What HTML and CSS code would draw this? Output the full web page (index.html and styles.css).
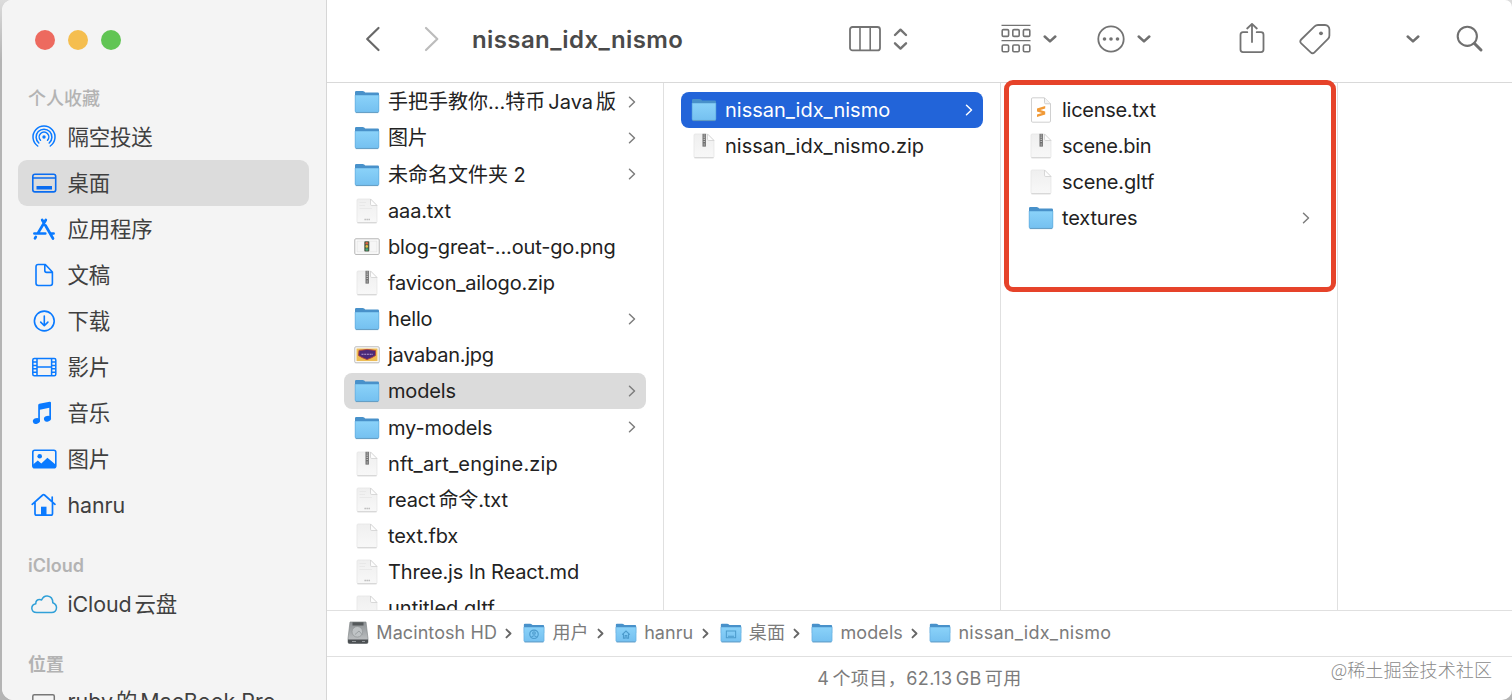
FILE: index.html
```html
<!DOCTYPE html>
<html lang="zh-CN">
<head>
  <meta charset="UTF-8" />
  <title>nissan_idx_nismo</title>
  <link rel="stylesheet" href="styles.css">
</head>
<body>

<svg class="defs" width="0" height="0">
  <defs>
    <linearGradient id="folderFront" x1="0" y1="0" x2="0" y2="1">
      <stop offset="0" stop-color="#8ad2f9" />
      <stop offset="1" stop-color="#74c0f0" />
    </linearGradient>
    <linearGradient id="paper" x1="0" y1="0" x2="0" y2="1">
      <stop offset="0" stop-color="#efefef" />
      <stop offset="1" stop-color="#f8f8f8" />
    </linearGradient>
    <linearGradient id="metal" x1="0" y1="0" x2="0" y2="1">
      <stop offset="0" stop-color="#8d9194" />
      <stop offset="1" stop-color="#c4c7c9" />
    </linearGradient>
  </defs>
  <symbol id="folder" viewBox="0 0 26 24">
    <path d="M1 2.2Q1 1 2.2 1H8.6Q9.5 1 10.2 1.6L11.2 2.5H23.8Q25 2.5 25 3.7V12H1Z" fill="#4891ca" />
    <path d="M1 5.2H25V21Q25 22.6 23.4 22.6H2.6Q1 22.6 1 21Z" fill="url(#folderFront)" />
    <path d="M1.2 5V21Q1.2 22.4 2.6 22.4H23.4Q24.8 22.4 24.8 21V5" fill="none" stroke="#62acde" stroke-width=".7" />
    <path d="M1.8 22.6H24.2" stroke="#6299be" stroke-width=".9" />
  </symbol>
  <symbol id="doc" viewBox="0 0 26 26">
    <path d="M3 2.2Q3 1 4.2 1H16.5L23 7.5V23.4Q23 24.6 21.8 24.6H4.2Q3 24.6 3 23.4Z" fill="url(#paper)" stroke="#e4e4e4" stroke-width=".7" />
    <path d="M3.4 24.8H22.6" stroke="#c8c8c8" stroke-width=".8" />
    <path d="M16.5 1V6.3Q16.5 7.5 17.7 7.5H23Z" fill="#fdfdfd" stroke="#cfcfcf" stroke-width=".8" />
  </symbol>
  <symbol id="text" viewBox="0 0 26 26">
    <use href="#doc" />
    <path d="M5.5 4.5H12M5.5 7.5H11M5.5 10.5H18" stroke="#e6e6e6" stroke-width=".8" />
    <path d="M10.5 21.5H16" stroke="#b4b4b4" stroke-width="1.6" stroke-dasharray="1.3 .7" />
  </symbol>
  <symbol id="zip" viewBox="0 0 26 26">
    <use href="#doc" />
    <path d="M13.2 .8V13.6" stroke="#6f6f6f" stroke-width="3.4" />
    <path d="M13.2 1.4V10" stroke="#c9c9c9" stroke-width="1.3" stroke-dasharray="1.1 1.1" />
    <path d="M13.2 10.2V12.8" stroke="#a5a5a5" stroke-width="1.2" />
  </symbol>
  <symbol id="sublime" viewBox="0 0 26 26">
    <path d="M3.5 2Q3.5 .8 4.7 .8H16.5L22.5 6.8V24Q22.5 25.2 21.3 25.2H4.7Q3.5 25.2 3.5 24Z" fill="#fff" stroke="#c4c4c4" stroke-width=".8" />
    <path d="M16.5 1V5.6Q16.5 6.8 17.7 6.8H22.4" fill="#f4f4f4" stroke="#c4c4c4" stroke-width=".8" />
    <path d="M17.2 9L9 11.4V14.6L14 16L9 17.4V20L17.2 17.6V14.4L12.3 13L17.2 11.6Z" fill="#f19a37" />
  </symbol>
  <symbol id="png" viewBox="0 0 26 18">
    <rect x=".8" y=".8" width="24.4" height="15.6" rx="1" fill="#fff" stroke="#b3b3b3" />
    <rect x="3" y="3" width="20" height="11" fill="#f6f6f6" stroke="#dcdcdc" stroke-width=".6" />
    <rect x="10.3" y="3.3" width="5" height="10.2" rx=".8" fill="#4c5b45" />
    <circle cx="12.8" cy="5.2" r="1.3" fill="#de6341" />
    <circle cx="12.8" cy="8.4" r="1.3" fill="#e4c144" />
    <circle cx="12.8" cy="11.5" r="1.3" fill="#3fae7c" />
  </symbol>
  <symbol id="jpg" viewBox="0 0 26 18">
    <rect x=".8" y=".8" width="24.4" height="16" rx="1" fill="#fff" stroke="#b9b9b9" />
    <rect x="2.5" y="2.5" width="21" height="12.6" fill="#edbd55" />
    <path d="M5 4.4L9 4L13 3.4L18 4L21.5 4.6V9.5L18 11.5L13 13.6L8 11.5L4.5 9.5Z" fill="#4b2a78" stroke="#b6453a" stroke-width=".9" />
    <path d="M7.5 8.3H19" stroke="#b9a1d3" stroke-width="1.1" stroke-dasharray="2 .7" />
  </symbol>
  <symbol id="disk" viewBox="0 0 22 24">
    <path d="M3 1H19L21 17.5V21Q21 22.5 19.5 22.5H2.5Q1 22.5 1 21V17.5Z" fill="url(#metal)" stroke="#85898b" stroke-width=".7" />
    <rect x="5.5" y="1.3" width="11" height="3.2" fill="#55595b" />
    <circle cx="10.3" cy="10.8" r="5.3" fill="#bfc3c5" stroke="#96999b" stroke-width=".8" />
    <path d="M8 13.5L12 10L15.5 14" fill="none" stroke="#9ba0a2" />
    <path d="M1 18.6H21V21Q21 22.6 19.5 22.6H2.5Q1 22.6 1 21Z" fill="#4b4f52" />
    <path d="M5 20.5H9M15 20.5H18" stroke="#92979a" />
  </symbol>
  <symbol id="next" viewBox="0 0 8 12">
    <path d="M1.5 1.3L6.5 6L1.5 10.7" fill="none" stroke="currentColor" stroke-width="1.5" stroke-linecap="round" stroke-linejoin="round" />
  </symbol>
  <symbol id="sep" viewBox="0 0 7 11">
    <path d="M1.5 1.6L5.5 5.5L1.5 9.4" fill="none" stroke="currentColor" stroke-width="1.9" stroke-linecap="round" stroke-linejoin="round" />
  </symbol>
  <symbol id="down" viewBox="0 0 14 8">
    <path d="M1.7 1.5L7 6.4L12.3 1.5" fill="none" stroke="currentColor" stroke-width="2.5" stroke-linecap="round" stroke-linejoin="round" />
  </symbol>
</svg>

<div class="window">
  <aside class="sidebar">
    <div class="lights"><i class="red"></i><i class="yellow"></i><i class="green"></i></div>
    <h2 class="heading">个人收藏</h2>
    <a class="place">
      <svg width="32" height="28" viewBox="0 0 32 28"><g fill="none" stroke="#0a7aff" stroke-width="1.5" stroke-linecap="round"><path d="M9.7 23A11 11 0 1 1 22.3 23" /><path d="M10.8 20A7.9 7.9 0 1 1 21.2 20" /><path d="M12.5 17.2A4.8 4.8 0 1 1 19.5 17.2" /></g><circle cx="16" cy="14" r="1.7" fill="#0a7aff" /></svg>
      <span>隔空投送</span>
    </a>
    <a class="place active">
      <svg width="32" height="28" viewBox="0 0 32 28"><rect x="4.8" y="5.3" width="22.9" height="17.6" rx="2.2" fill="none" stroke="#0a6cf0" stroke-width="1.6" /><path d="M5 9H27.5" stroke="#0a6cf0" stroke-width="1.5" /><rect x="8.5" y="17" width="15.5" height="3.5" fill="#0a6cf0" /></svg>
      <span>桌面</span>
    </a>
    <a class="place">
      <svg width="32" height="28" viewBox="0 0 32 28"><g fill="none" stroke="#0a7aff" stroke-width="2.7" stroke-linecap="round"><path d="M17.8 5L9.8 18.4M14.2 5L16 8M17.5 10.5L25 23.5M6.4 18.5H17.3M22.6 18.5H25.6" /><path d="M7.8 21.9L7 23.3" /></g></svg>
      <span>应用程序</span>
    </a>
    <a class="place">
      <svg width="32" height="28" viewBox="0 0 32 28"><path d="M8 5.7Q8 3.5 10.2 3.5H17.3L24.4 11V22.3Q24.4 24.5 22.2 24.5H10.2Q8 24.5 8 22.3ZM16.8 3.7V9.6Q16.8 11.4 18.6 11.4H24.2" fill="none" stroke="#0a7aff" stroke-width="1.6" stroke-linejoin="round" /></svg>
      <span>文稿</span>
    </a>
    <a class="place">
      <svg width="32" height="28" viewBox="0 0 32 28"><g fill="none" stroke="#0a7aff" stroke-width="1.6" stroke-linecap="round" stroke-linejoin="round"><circle cx="16.3" cy="14" r="9.9" /><path d="M16.3 9V18.5M12.7 15.1L16.3 18.7L19.9 15.1" /></g></svg>
      <span>下载</span>
    </a>
    <a class="place">
      <svg width="32" height="28" viewBox="0 0 32 28"><g fill="none" stroke="#0a7aff" stroke-width="1.5"><rect x="4.8" y="5.5" width="23" height="17.3" rx="1.5" /><path d="M9 5.5V23M23.6 5.5V23M9 14.1H23.6M5 9H9M5 12.4H9M5 15.8H9M5 19.2H9M23.6 9H27.5M23.6 12.4H27.5M23.6 15.8H27.5M23.6 19.2H27.5" /></g></svg>
      <span>影片</span>
    </a>
    <a class="place">
      <svg width="32" height="28" viewBox="0 0 32 28"><g fill="#0a7aff"><path d="M10.2 6.2Q10.2 5.1 11.3 4.8L21.6 2.7Q23 2.5 23 3.8V20H21.3V8.8L11.9 10.8V22.5H10.2Z" /><ellipse cx="8.4" cy="22" rx="3.6" ry="2.8" transform="rotate(-15 8.4 22)" /><ellipse cx="19.5" cy="19.8" rx="3.6" ry="2.8" transform="rotate(-15 19.5 19.8)" /></g></svg>
      <span>音乐</span>
    </a>
    <a class="place">
      <svg width="32" height="28" viewBox="0 0 32 28"><rect x="4.8" y="5.3" width="23" height="17.5" rx="2" fill="none" stroke="#0a7aff" stroke-width="1.6" /><circle cx="11.7" cy="11.2" r="2.3" fill="#0a7aff" /><path d="M5 19.5L9.8 15.6L13.3 18.5L19.4 12.8L27.5 19.5V22.5H5Z" fill="#0a7aff" /></svg>
      <span>图片</span>
    </a>
    <a class="place">
      <svg width="32" height="28" viewBox="0 0 32 28"><path d="M4.2 13.3L14.7 4Q15.6 3.3 16.5 4L27 13.3M7 11.5V22.5Q7 24.2 8.7 24.2H22.8Q24.5 24.2 24.5 22.5V11.5M24.2 6V10.5" fill="none" stroke="#0a7aff" stroke-width="1.7" stroke-linecap="round" /><path d="M13 24V15.7H18.5V24Z" fill="#0a7aff" /></svg>
      <span>hanru</span>
    </a>
    <h2 class="heading later">iCloud</h2>
    <a class="place">
      <svg width="32" height="28" viewBox="0 0 32 28"><path d="M8.8 22.6Q4 22.3 3.8 18.2Q3.8 14.6 7.8 13.7Q7.6 9.6 11.8 9.6Q12.8 9.6 13.6 10Q15.5 5.7 19.3 6Q24.7 6.4 24.8 12.7Q28.5 14.1 28.5 17.7Q28.3 22.3 23.5 22.6Z" fill="none" stroke="#30a0d8" stroke-width="1.5" stroke-linejoin="round" /></svg>
      <span>iCloud<b class="thin"></b>云盘</span>
    </a>
    <h2 class="heading later">位置</h2>
    <a class="place last">
      <svg width="32" height="28" viewBox="0 0 32 28"><rect x="4.8" y="6.8" width="21.5" height="15" rx="1.5" fill="none" stroke="#777" stroke-width="1.5" /><path d="M2 24H29" stroke="#777" stroke-width="1.5" /></svg>
      <span>ruby<b class="thin"></b>的<b class="thin"></b>MacBook Pro</span>
    </a>
  </aside>

  <main class="main">
    <header class="toolbar">
      <svg class="back" width="16" height="26" viewBox="0 0 16 26"><path d="M13.5 2L2.2 13L13.5 24" fill="none" stroke="#686868" stroke-width="2.2" stroke-linecap="round" stroke-linejoin="round" /></svg>
      <svg class="forward" width="16" height="26" viewBox="0 0 16 26"><path d="M2 2L13.3 13L2 24" fill="none" stroke="#bcbcbc" stroke-width="2.2" stroke-linecap="round" stroke-linejoin="round" /></svg>
      <h1 class="title">nissan_idx_nismo</h1>
      <div class="tool view">
        <svg width="32" height="26" viewBox="0 0 32 26"><g fill="none" stroke="#737373" stroke-width="1.8"><rect x="1" y="1" width="30" height="23.4" rx="2.5" /><path d="M11 1V24.4M21.2 1V24.4" stroke-width="1.6" /></g></svg>
        <svg width="15" height="24" viewBox="0 0 15 24"><path d="M2 8L7.5 2.7L13 8M2 16.3L7.5 21.6L13 16.3" fill="none" stroke="#737373" stroke-width="2.4" stroke-linecap="round" stroke-linejoin="round" /></svg>
      </div>
      <div class="tool group">
        <svg width="30" height="30" viewBox="0 0 30 30"><g fill="none" stroke="#737373" stroke-width="1.6"><path d="M.5 1.4H29.5M.5 16.6H29.5" stroke-width="1.4" /><rect x="1.2" y="5.6" width="6.4" height="6.8" rx="1.2" /><rect x="11.8" y="5.6" width="6.4" height="6.8" rx="1.2" /><rect x="22.4" y="5.6" width="6.4" height="6.8" rx="1.2" /><rect x="1.2" y="21" width="6.4" height="6.8" rx="1.2" /><rect x="11.8" y="21" width="6.4" height="6.8" rx="1.2" /><rect x="22.4" y="21" width="6.4" height="6.8" rx="1.2" /></g></svg>
        <svg width="14" height="8"><use href="#down" /></svg>
      </div>
      <div class="tool more">
        <svg width="28" height="28" viewBox="0 0 28 28"><circle cx="14" cy="14" r="12.7" fill="none" stroke="#737373" stroke-width="1.8" /><g fill="#737373"><circle cx="7.5" cy="14" r="1.8" /><circle cx="14" cy="14" r="1.8" /><circle cx="20.5" cy="14" r="1.8" /></g></svg>
        <svg width="14" height="8"><use href="#down" /></svg>
      </div>
      <svg class="share" width="26" height="32" viewBox="0 0 26 32"><g fill="none" stroke="#737373" stroke-width="1.8" stroke-linecap="round" stroke-linejoin="round"><path d="M8.3 9.2H4Q1.5 9.2 1.5 11.7V26.6Q1.5 29.1 4 29.1H22Q24.5 29.1 24.5 26.6V11.7Q24.5 9.2 22 9.2H17.7" /><path d="M13 19V.9M8.2 5.5L13 .9L17.8 5.5" /></g></svg>
      <svg class="tag" width="32" height="32" viewBox="0 0 32 32"><path d="M15.6 3.4Q17 2 19 2H26Q28 2 29.2 3.3Q30.4 4.6 30.4 6.5V12.5Q30.4 14.5 29 15.9L15.5 29.3Q13.6 31.2 11.7 29.3L2.2 20.3Q.3 18.4 2.2 16.5Z" fill="none" stroke="#737373" stroke-width="1.8" stroke-linejoin="round" /><circle cx="22" cy="10.3" r="1.9" fill="#737373" /></svg>
      <svg class="overflow" width="14" height="8"><use href="#down" /></svg>
      <svg class="search" width="28" height="28" viewBox="0 0 28 28"><g fill="none" stroke="#707070" stroke-linecap="round"><circle cx="11.3" cy="11.3" r="9.6" stroke-width="2.1" /><path d="M18.5 18.5L25 25" stroke-width="3" /></g></svg>
    </header>

    <div class="columns">
      <section class="column first">
        <div class="file"><svg width="26" height="24"><use href="#folder" /></svg><span class="plain">手把手教你…特币<b class="thin"></b>Java<b class="thin"></b>版</span><svg class="next"><use href="#next" /></svg></div>
        <div class="file"><svg width="26" height="24"><use href="#folder" /></svg><span>图片</span><svg class="next"><use href="#next" /></svg></div>
        <div class="file"><svg width="26" height="24"><use href="#folder" /></svg><span class="plain">未命名文件夹 2</span><svg class="next"><use href="#next" /></svg></div>
        <div class="file"><svg width="26" height="26"><use href="#text" /></svg><span>aaa.txt</span></div>
        <div class="file"><svg width="26" height="18"><use href="#png" /></svg><span>blog-great-...out-go.png</span></div>
        <div class="file"><svg width="26" height="26"><use href="#zip" /></svg><span>favicon_ailogo.zip</span></div>
        <div class="file"><svg width="26" height="24"><use href="#folder" /></svg><span>hello</span><svg class="next"><use href="#next" /></svg></div>
        <div class="file"><svg width="26" height="18"><use href="#jpg" /></svg><span class="tight">javaban.jpg</span></div>
        <div class="file open"><svg width="26" height="24"><use href="#folder" /></svg><span>models</span><svg class="next"><use href="#next" /></svg></div>
        <div class="file"><svg width="26" height="24"><use href="#folder" /></svg><span>my-models</span><svg class="next"><use href="#next" /></svg></div>
        <div class="file"><svg width="26" height="26"><use href="#zip" /></svg><span class="wide">nft_art_engine.zip</span></div>
        <div class="file"><svg width="26" height="26"><use href="#text" /></svg><span>react<b class="thin"></b>命令.txt</span></div>
        <div class="file"><svg width="26" height="26"><use href="#doc" /></svg><span>text.fbx</span></div>
        <div class="file"><svg width="26" height="26"><use href="#text" /></svg><span>Three.js In React.md</span></div>
        <div class="file"><svg width="26" height="26"><use href="#doc" /></svg><span class="plain">untitled.gltf</span></div>
      </section>
      <section class="column">
        <div class="file selected"><svg width="26" height="24"><use href="#folder" /></svg><span class="plain">nissan_idx_nismo</span><svg class="next"><use href="#next" /></svg></div>
        <div class="file"><svg width="26" height="26"><use href="#zip" /></svg><span class="plain">nissan_idx_nismo.zip</span></div>
      </section>
      <section class="column">
        <div class="file"><svg width="26" height="26"><use href="#sublime" /></svg><span class="tight">license.txt</span></div>
        <div class="file"><svg width="26" height="26"><use href="#zip" /></svg><span class="tight">scene.bin</span></div>
        <div class="file"><svg width="26" height="26"><use href="#doc" /></svg><span>scene.gltf</span></div>
        <div class="file"><svg width="26" height="24"><use href="#folder" /></svg><span>textures</span><svg class="next"><use href="#next" /></svg></div>
        <div class="marker"></div>
      </section>
    </div>

    <nav class="path">
      <svg width="22" height="24"><use href="#disk" /></svg><span class="crumb">Macintosh HD</span>
      <svg class="sep"><use href="#sep" /></svg>
      <svg width="22" height="22" viewBox="0 0 26 24"><use href="#folder" width="26" height="24" /><g fill="none" stroke="#4c9bcc" stroke-width="1.4"><circle cx="13" cy="13.5" r="5" /><circle cx="13" cy="12" r="1.5" /><path d="M10 17Q13 13.5 16 17" /></g></svg><span class="crumb">用户</span>
      <svg class="sep"><use href="#sep" /></svg>
      <svg width="22" height="22" viewBox="0 0 26 24"><use href="#folder" width="26" height="24" /><path d="M8.5 14L13 9.7L17.5 14M10 13V18H12V15H14V18H16V13" fill="none" stroke="#4c9bcc" stroke-width="1.3" /></svg><span class="crumb">hanru</span>
      <svg class="sep"><use href="#sep" /></svg>
      <svg width="22" height="22" viewBox="0 0 26 24"><use href="#folder" width="26" height="24" /><path d="M7.5 9.5H18.5V17.5H7.5ZM9.5 15.8H16.5" fill="none" stroke="#4c9bcc" stroke-width="1.2" /></svg><span class="crumb">桌面</span>
      <svg class="sep"><use href="#sep" /></svg>
      <svg width="22" height="22"><use href="#folder" /></svg><span class="crumb">models</span>
      <svg class="sep"><use href="#sep" /></svg>
      <svg width="22" height="22"><use href="#folder" /></svg><span class="crumb current">nissan_idx_nismo</span>
    </nav>

    <footer class="status">4<b class="thin"></b>个项目，62.13<b class="thin"></b>GB<b class="thin"></b>可用</footer>
  </main>
</div>

<div class="watermark">@稀土掘金技术社区</div>

</body>
</html>
```

FILE: styles.css
```css
* {
  box-sizing: border-box;
}

body {
  margin: 0;
  width: 1512px;
  height: 700px;
  overflow: hidden;
  position: relative;
  background: linear-gradient(#dcdcdc 0, #b4b4b4 60px, #b4b4b4 100%);
  font-family: Inter, "Noto Sans CJK SC", sans-serif;
  color: #222;
}

svg {
  display: block;
  flex: none;
}

.defs {
  position: absolute;
}

.window {
  display: flex;
  height: 700px;
  margin-left: 2px;
  border-radius: 10px 7px 10px 12px;
  overflow: hidden;
  background: #fff;
}

/* gap between latin and chinese runs */
.thin {
  display: inline-block;
  width: 3px;
}

/* sidebar */
.sidebar {
  width: 325px;
  flex: none;
  background: #f4f4f4;
  border-right: 1px solid #d6d6d6;
  padding-left: 16px;
}

.lights {
  display: flex;
  gap: 13px;
  padding: 29.5px 0 0 16.5px;
  height: 83px;
}

.lights i {
  width: 20px;
  height: 20px;
  border-radius: 50%;
}

.red { background: #ed6a5f; }
.yellow { background: #f5be4f; }
.green { background: #61c554; }

.heading {
  margin: 0;
  height: 31px;
  line-height: 31px;
  padding-left: 10px;
  font-size: 18px;
  font-weight: 600;
  color: #b3b3b3;
}

.heading:not(.later) {
  font-weight: 500;
}

.heading.later {
  margin-top: 21px;
  height: 32px;
  line-height: 34px;
}

.place {
  display: flex;
  align-items: center;
  gap: 7.5px;
  width: 291px;
  height: 46px;
  padding-left: 10px;
  border-radius: 9px;
  font-size: 21.4px;
  line-height: 24px;
  color: #404040;
  white-space: nowrap;
}

.place span {
  margin-top: -1px;
  letter-spacing: -.1px;
}

.place.active {
  background: #dcdcdc;
}

.place.last {
  margin-top: -1px;
}

.place.last span {
  margin-top: -2px;
  letter-spacing: 0;
}

/* toolbar */
.main {
  flex: 1;
  min-width: 0;
  display: flex;
  flex-direction: column;
}

.toolbar {
  height: 83px;
  flex: none;
  display: flex;
  align-items: center;
  padding: 0 0 5px 38px;
  border-bottom: 1px solid #d9d9d9;
  color: #707070;
}

.forward {
  margin-left: 43px;
}

.title {
  width: 377px;
  margin: 1px 0 0 32px;
  font-size: 24px;
  font-weight: 600;
  letter-spacing: .4px;
  color: #4a4a4a;
}

.tool {
  display: flex;
  align-items: center;
}

.view {
  gap: 12px;
}

.group {
  margin-left: 93px;
  gap: 12px;
}

.more {
  margin-left: 40px;
  gap: 12px;
}

.share {
  margin-left: 88px;
}

.tag {
  margin-left: 34px;
}

.overflow {
  margin: 1px 0 0 75px;
}

.search {
  margin-left: 36px;
}

/* file columns */
.columns {
  height: 527px;
  flex: none;
  display: flex;
  clip-path: inset(-4px 0 0 0);
}

.column {
  position: relative;
  width: 337px;
  flex: none;
  padding: 9px 17px 0;
  border-right: 1px solid #e0e0e0;
}

.column.first {
  padding-top: 1.2px;
}

.file {
  display: flex;
  align-items: center;
  height: 36.15px;
  padding: 0 10.5px 0 9.5px;
  border-radius: 8px;
  font-size: 20px;
  line-height: 24px;
  white-space: nowrap;
}

.file span {
  flex: 1;
  margin-left: 8.5px;
  letter-spacing: -.15px;
}

.file .plain {
  letter-spacing: 0;
}

.file .tight {
  letter-spacing: -.28px;
}

.file .wide {
  letter-spacing: .17px;
}

.file.open {
  background: #dbdbdb;
}

.file.selected {
  background: #2264d9;
  color: #fff;
}

.next {
  width: 8px;
  height: 12px;
  margin-bottom: 1px;
  color: #7d7d7d;
}

.selected .next {
  color: #fff;
}

.marker {
  position: absolute;
  left: 3px;
  top: -3px;
  width: 332px;
  height: 212px;
  border: 5px solid #e6432a;
  border-radius: 9px;
}

/* path bar */
.path {
  height: 47px;
  flex: none;
  display: flex;
  align-items: center;
  padding: 0 0 1px 20px;
  border-top: 1px solid #e0e0e0;
  border-bottom: 1px solid #e0e0e0;
  font-size: 18px;
  line-height: 22px;
  letter-spacing: .08px;
  color: #7b7b7b;
  white-space: nowrap;
}

.crumb {
  margin: -1px 0 0 7.3px;
}

.current {
  letter-spacing: .27px;
}

.sep {
  width: 7px;
  height: 11px;
  margin: 0 11px 0 8.2px;
  color: #666;
}

.status {
  flex: 1;
  line-height: 43px;
  text-align: center;
  font-size: 18px;
  letter-spacing: .45px;
  color: #7b7b7b;
}

.watermark {
  position: absolute;
  right: 20px;
  top: 655px;
  line-height: 28px;
  font-family: "Noto Sans CJK SC", sans-serif;
  font-size: 18.1px;
  font-weight: 300;
  color: #8a8a8a;
}
```
